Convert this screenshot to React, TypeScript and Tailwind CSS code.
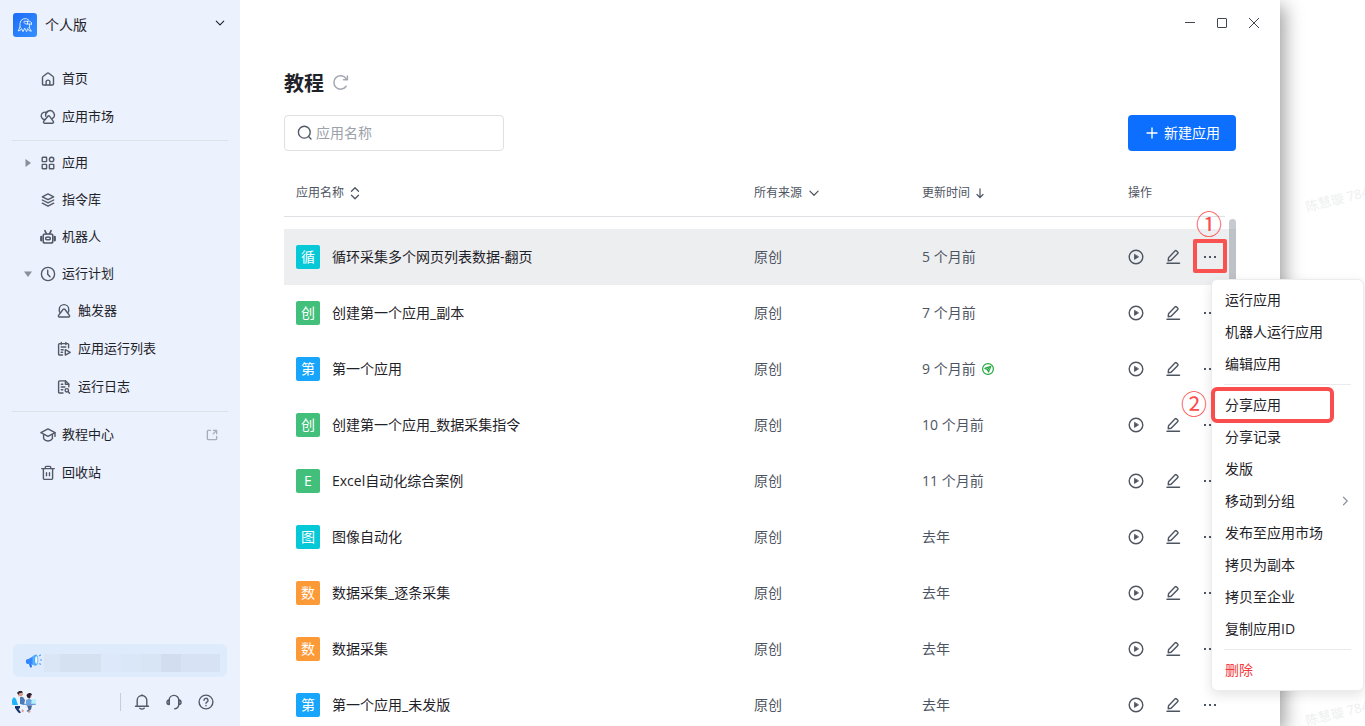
import type { ReactNode } from "react";

const stroke = {
  fill: "none",
  stroke: "currentColor",
  strokeWidth: 1.4,
  strokeLinecap: "round" as const,
  strokeLinejoin: "round" as const,
};

function Icon({ children, className = "size-4" }: { children: ReactNode; className?: string }) {
  return (
    <svg viewBox="0 0 16 16" className={`shrink-0 ${className}`} aria-hidden="true" {...stroke}>
      {children}
    </svg>
  );
}

const HomeIcon = () => (
  <Icon>
    <path d="M2.500 6.500c0-.4.200-.8.500-1l4.200-3.200a1.300 1.300 0 0 1 1.600 0L13 5.500c.3.200.5.600.5 1V13a1 1 0 0 1-1 1h-9a1 1 0 0 1-1-1z" />
    <path d="M6.100 13.900v-2.900a1.900 1.900 0 0 1 3.800 0v2.900" />
  </Icon>
);

const MarketIcon = () => (
  <Icon>
    <path d="M4.600 10.500a3.700 3.700 0 1 1 2.300-6.800" />
    <path d="M5.900 7.200A4.300 4.300 0 1 1 12.600 9.400" />
    <path d="M7.900 7.200 3.700 12.300c-.6.800-.2 1.900.8 1.900h8c1 0 1.400-1.100.8-1.900L9.500 7.200c-.5-.6-1.100-.6-1.600 0z" />
  </Icon>
);

const AppsIcon = () => (
  <Icon>
    <rect x="2.200" y="2.200" width="4.400" height="4.400" rx="0.600" />
    <circle cx="11.600" cy="4.400" r="2.200" />
    <rect x="2.200" y="9.400" width="4.400" height="4.400" rx="0.600" />
    <rect x="9.400" y="9.400" width="4.400" height="4.400" rx="0.600" />
  </Icon>
);

const LayersIcon = () => (
  <Icon>
    <path d="M8 1.900 13.700 4.800 8 7.700 2.300 4.800z" />
    <path d="M2.300 8 8 10.900 13.700 8" />
    <path d="M2.300 11.200 8 14.100l5.700-2.900" />
  </Icon>
);

const RobotIcon = () => (
  <Icon>
    <rect x="3.200" y="5" width="9.600" height="9" rx="1.800" strokeWidth="1.600" />
    <path d="M6.500 4.800 4.900 1.600M9.500 4.800l1.600-3.200" strokeWidth="1.600" />
    <ellipse cx="8" cy="9.400" rx="2.400" ry="1.400" />
    <path d="M1.200 7.900v3.400M14.800 7.900v3.400" strokeWidth="2.200" />
  </Icon>
);

const ClockIcon = () => (
  <Icon>
    <circle cx="8" cy="8" r="6.600" />
    <path d="M7.700 4.300v4l2.300 2.500" />
  </Icon>
);

const TriggerIcon = () => (
  <Icon>
    <path d="M3.700 9.200A4.900 4.900 0 0 1 3.300 6.300 4.700 4.700 0 0 1 12.700 6.300a4.900 4.900 0 0 1-.4 2.900" />
    <path d="M8 5.900c-.5 0-.8.200-1 .6L2.600 12.400c-.5.800-.1 1.600.8 1.600h9.200c.9 0 1.300-.8.800-1.600L9 6.500c-.2-.4-.5-.6-1-.6z" />
  </Icon>
);

const RunListIcon = () => (
  <Icon>
    <path d="M6.500 14H3.600a1 1 0 0 1-1-1V3.600a1 1 0 0 1 1-1h8a1 1 0 0 1 1 1v3.200" />
    <path d="M5.300 1.500v2M9.900 1.500v2M5.200 6h4.600M5.200 8.700h2M5.200 11.300h1.300" />
    <path d="M9.300 8.700v5.400l4.900-2.700z" />
  </Icon>
);

const LogIcon = () => (
  <Icon>
    <path d="M7 14H3.600a1 1 0 0 1-1-1V2.900a1 1 0 0 1 1-1h6l3.200 3.200v2.700" />
    <path d="M9.400 2v3.300h3.300M5.300 5.300h1.500M5.300 8h3.600M5.300 10.700h1.500" />
    <circle cx="10.800" cy="11.300" r="1.700" />
    <path d="m12.200 12.600 1.300 1.700" />
  </Icon>
);

const CourseIcon = () => (
  <Icon>
    <path d="M8 1.900.900 5.600 8 9.300l7.100-3.700z" />
    <path d="M3.600 7.600v4.100C4.600 13.300 6.200 14 8 14s3.400-.7 4.400-2.300V7.600M15 6v3.400" />
  </Icon>
);

const TrashIcon = () => (
  <Icon>
    <path d="M1.700 3.600h12.600M5.300 3.400V2.200a.8.800 0 0 1 .8-.8h3.800a.8.800 0 0 1 .8.800v1.200" />
    <path d="M3.400 4v9.200a1.200 1.200 0 0 0 1.200 1.200h6.800a1.200 1.200 0 0 0 1.200-1.200V4M6.500 7.700v3M9.500 7.700v3" />
  </Icon>
);

const ExternalIcon = () => (
  <Icon className="size-3 text-[#a9aeb8]">
    <path
      d="M6 1.800H3a1.200 1.200 0 0 0-1.200 1.200v10A1.200 1.200 0 0 0 3 14.200h10a1.200 1.200 0 0 0 1.200-1.200v-3M9.800 1.800h4.400v4.400M14 2 9.500 6.500"
      strokeWidth="1.800"
    />
  </Icon>
);

type Item = {
  label: string;
  icon: ReactNode;
  arrow?: "right" | "down";
  external?: boolean;
};

function NavItem({ item, height, nested = false }: { item: Item; height: string; nested?: boolean }) {
  return (
    <li>
      <a
        href="#"
        className={`flex items-center pr-[22px] text-[13px] text-[#1f2329] ${height} ${nested ? "pl-14" : "pl-6"}`}
      >
        {!nested && (
          <span className="flex w-4 shrink-0">
            {item.arrow && (
              <svg viewBox="0 0 8 8" className="size-2 fill-[#8a8f99]" aria-hidden="true">
                {item.arrow === "right" ? <path d="M1.500 0 7 4 1.500 8z" /> : <path d="M0 1.500h8L4 7z" />}
              </svg>
            )}
          </span>
        )}
        <span className="mr-[6px] text-[#525967]">{item.icon}</span>
        <span className="flex-1">{item.label}</span>
        {item.external && <ExternalIcon />}
      </a>
    </li>
  );
}

function Logo() {
  return (
    <svg viewBox="0 0 24 24" className="size-6 shrink-0" aria-hidden="true">
      <defs>
        <linearGradient id="logo-fill" x1="0" y1="0" x2="1" y2="1">
          <stop offset="0" stopColor="#1c6cf6" />
          <stop offset="1" stopColor="#3590ff" />
        </linearGradient>
      </defs>
      <rect width="24" height="24" rx="3" fill="url(#logo-fill)" />
      <g fill="none" stroke="#eaf3ff" strokeWidth="0.900" strokeLinejoin="round" strokeLinecap="round">
        <path d="M7 14.500V10.500A5.200 5.200 0 0 1 15.800 7" />
        <path d="M11.500 8.300h5l2 1.200v2.200l-1.200-.7h-4.800l-1.200-1.200zM14.500 8.300v2.700M16.600 11.200v3.300" />
        <path d="m7 14-1.800 4 2.400-.8.900-1.700 1.500 3.200 1.700-3.500 1.900 3.500 1.100-3.200 1.300 2.200 2.500.5-1.600-2.300-.9-1.400" />
      </g>
    </svg>
  );
}

function Megaphone() {
  return (
    <svg viewBox="0 0 18 16" className="h-4 w-[18px] shrink-0" aria-hidden="true">
      <path d="M1.500 6.500 4 5.700l6.500-4v11L5 10.800l-2.500.3C1 11 .3 7.500 1.500 6.500z" fill="#3386ff" />
      <path d="m3.800 10.500 2.700.8.500 3-1.800.3z" fill="#2271f5" />
      <path d="m7.500 3.600 3-2v11l-3-.9z" fill="#56b4ff" />
      <ellipse cx="11" cy="7" rx="2.300" ry="5.400" fill="#4da8ff" />
      <ellipse cx="11.300" cy="7" rx="1.200" ry="3.800" fill="#f2f9ff" />
      <path d="m14.200 3 1.600-1.300M15 7h2M14.300 10.500l1.600 1.100" stroke="#4b9dff" strokeWidth="1.200" />
    </svg>
  );
}

function Avatar() {
  return (
    <svg viewBox="0 0 24 24" className="size-6" role="img" aria-label="头像">
      <defs>
        <clipPath id="avatar-clip">
          <circle cx="12" cy="12" r="12" />
        </clipPath>
      </defs>
      <g clipPath="url(#avatar-clip)">
        <rect width="24" height="24" fill="#eef3fc" />
        <path d="M6 2h4.500l.5 2.500L9 7H6.500z" fill="#d99a86" />
        <path d="M5 3 6.500 1H10l.7 1.700L7.500 3 6.500 5z" fill="#2b2439" />
        <path d="M3 7.500 8 6l4 2.500 1 6-2 2.500H4z" fill="#eaf4ff" />
        <path d="M8 7h3l2 3-1 5-4-1z" fill="#507ab3" />
        <path d="M0 9c2-3 4-1 4.500 1.500L6 15H0z" fill="#20b5fa" />
        <path d="M3 16h5v2l-1.500 1L9 22.500l-2 1L3 18z" fill="#17366f" />
        <circle cx="17.300" cy="6" r="2.300" fill="#d89a8b" />
        <path d="M14.500 5.500c.5-3 5-3.500 5.500-.5l-1.500.5-.5 3-2.500-1z" fill="#2a1d31" />
        <path d="M14 10 17 8.500l3.500 2v5H14z" fill="#6fa4dc" />
        <path d="M20 9h4v5h-5z" fill="#b5f1fb" />
        <path d="M12 13.800h12v1.300H12z" fill="#6a9cdd" />
        <path d="M15 15.500h5l-1 4-3 2.500-1.500-1 2-1.500z" fill="#4b6493" />
        <path d="m18 20 1 2.500-2 1-1-1.500zM10 19l2 1.500-1 2-1.500-1z" fill="#d5a497" />
      </g>
    </svg>
  );
}

const topItems: Item[] = [
  { label: "首页", icon: <HomeIcon /> },
  { label: "应用市场", icon: <MarketIcon /> },
];

const mainItems: Item[] = [
  { label: "应用", icon: <AppsIcon />, arrow: "right" },
  { label: "指令库", icon: <LayersIcon /> },
  { label: "机器人", icon: <RobotIcon /> },
  { label: "运行计划", icon: <ClockIcon />, arrow: "down" },
];

const planItems: Item[] = [
  { label: "触发器", icon: <TriggerIcon /> },
  { label: "应用运行列表", icon: <RunListIcon /> },
  { label: "运行日志", icon: <LogIcon /> },
];

const bottomItems: Item[] = [
  { label: "教程中心", icon: <CourseIcon />, external: true },
  { label: "回收站", icon: <TrashIcon /> },
];

function Sidebar() {
  return (
    <aside className="flex w-60 shrink-0 flex-col bg-[#ebf1fd]">
      <button type="button" className="mb-[11px] flex h-[49px] items-center gap-2 pl-[13px] pr-[14px] text-sm text-[#1f2329]">
        <Logo />
        <span className="flex-1 text-left">个人版</span>
        <Icon className="mb-1 size-3">
          <path d="m3 5.500 5 5 5-5" strokeWidth="1.500" />
        </Icon>
      </button>
      <nav className="flex-1">
        <ul>
          {topItems.map((item) => (
            <NavItem key={item.label} item={item} height="h-[38px]" />
          ))}
        </ul>
        <hr className="mx-3 mt-1 mb-[3px] border-[#dee1e8]" />
        <ul>
          {mainItems.map((item) => (
            <NavItem key={item.label} item={item} height="h-[37px]" />
          ))}
          {planItems.map((item) => (
            <NavItem key={item.label} item={item} height="h-[38px]" nested />
          ))}
        </ul>
        <hr className="mx-3 mt-[5px] mb-1 border-[#dee1e8]" />
        <ul>
          {bottomItems.map((item) => (
            <NavItem key={item.label} item={item} height="h-[38px]" />
          ))}
        </ul>
      </nav>
      <div className="mx-[13px] flex h-[33px] items-center rounded-md bg-[#deebfd] pl-3 pr-[7px]">
        <Megaphone />
        <div className="mt-[4px] ml-[1px] flex h-[18px] flex-1">
          <span className="w-4 bg-[#dae6f6]" />
          <span className="w-[41px] bg-[#d5e1f1]" />
          <span className="w-5 bg-[#dde9fa]" />
          <span className="w-5 bg-[#dae7f8]" />
          <span className="w-5 bg-[#d8e5f5]" />
          <span className="w-5 bg-[#d2deef]" />
          <span className="flex-1 bg-[#d7e3f4]" />
        </div>
      </div>
      <div className="flex h-[49px] items-center pl-3 pr-[26px] text-[#525967]">
        <Avatar />
        <div className="ml-auto flex items-center gap-4">
          <span className="-mr-[3px] h-[18px] w-px bg-[#c9cdd4]" />
          <button type="button" aria-label="通知" className="flex">
            <Icon>
              <path d="M1.500 12.300h13M3.200 12.200V6.300a4.800 4.800 0 0 1 9.600 0v5.900" />
              <path d="M5.800 14.300c1.300 1 3.100 1 4.400 0M8 1.400V.900" />
            </Icon>
          </button>
          <button type="button" aria-label="客服" className="flex">
            <Icon>
              <path d="M3.200 10V6.200a4.800 4.800 0 0 1 9.600 0V10c0 2.700-1.600 4.500-4 4.800" />
              <path d="M3.200 6C.200 6 .200 10.500 3.200 10.500zM12.800 6c3 0 3 4.500 0 4.500z" />
            </Icon>
          </button>
          <button type="button" aria-label="帮助" className="flex">
            <Icon>
              <circle cx="8" cy="8" r="6.900" />
              <path d="M6 6.300a2 2 0 1 1 2.900 1.800c-.6.300-.9.600-.9 1.200M8 11.500v.2" />
            </Icon>
          </button>
        </div>
      </div>
    </aside>
  );
}

type Row = { badge: string; color: string; name: string; time: string; published?: boolean };

const rows: Row[] = [
  { badge: "循", color: "bg-[#06c8d6]", name: "循环采集多个网页列表数据-翻页", time: "5 个月前" },
  { badge: "创", color: "bg-[#42c07b]", name: "创建第一个应用_副本", time: "7 个月前" },
  { badge: "第", color: "bg-[#18a6fd]", name: "第一个应用", time: "9 个月前", published: true },
  { badge: "创", color: "bg-[#42c07b]", name: "创建第一个应用_数据采集指令", time: "10 个月前" },
  { badge: "E", color: "bg-[#42c07b]", name: "Excel自动化综合案例", time: "11 个月前" },
  { badge: "图", color: "bg-[#06c8d6]", name: "图像自动化", time: "去年" },
  { badge: "数", color: "bg-[#fd9a38]", name: "数据采集_逐条采集", time: "去年" },
  { badge: "数", color: "bg-[#fd9a38]", name: "数据采集", time: "去年" },
  { badge: "第", color: "bg-[#18a6fd]", name: "第一个应用_未发版", time: "去年" },
];

function Step({ children, className }: { children: ReactNode; className: string }) {
  return (
    <span
      className={`absolute font-['Noto_Sans_CJK_SC',sans-serif] text-[26px] leading-6 text-[#fa4d4d] ${className}`}
    >
      {children}
    </span>
  );
}

function AppRow({ row, active }: { row: Row; active: boolean }) {
  return (
    <tr className={`h-14 ${active ? "bg-[#edeef0]" : ""}`}>
      <td className="px-3">
        <div className="flex items-center gap-3 text-[#1f2329]">
          <span className={`flex size-6 items-center justify-center rounded-[2px] text-white ${row.color}`}>
            {row.badge}
          </span>
          {row.name}
        </div>
      </td>
      <td className="px-3">原创</td>
      <td className="px-3">
        <div className="flex items-center gap-[6px]">
          {row.time}
          {row.published && (
            <Icon className="size-3 text-[#1fa83c]">
              <circle cx="8" cy="8" r="7.200" strokeWidth="1.600" />
              <path d="M11.800 4.500 3.800 7.200l3.400 1.500 1.500 3.300zM7.200 8.700l1.500-1.400" strokeWidth="1.500" />
            </Icon>
          )}
        </div>
      </td>
      <td colSpan={2} className="pl-[13px]">
        <div className="flex items-center gap-[21px]">
          <button type="button" aria-label="运行" className="flex">
            <Icon>
              <circle cx="8" cy="8" r="6.800" />
              <path d="M6.500 5.600v4.800L10.300 8z" fill="currentColor" strokeWidth="0.800" />
            </Icon>
          </button>
          <button type="button" aria-label="编辑" className="flex">
            <Icon>
              <path d="M2 14.300h12.500" strokeWidth="1.500" />
              <path d="m3.200 11.700.3-3 6.700-6.900a.8.800 0 0 1 1.100 0l1.500 1.500a.8.800 0 0 1 0 1.100L6.100 11.300z" />
            </Icon>
          </button>
          <button type="button" aria-label="更多" className="relative flex">
            <Icon>
              <g fill="currentColor" stroke="none">
                <rect x="2" y="7" width="2" height="2" />
                <rect x="7" y="7" width="2" height="2" />
                <rect x="12" y="7" width="2" height="2" />
              </g>
            </Icon>
            {active && (
              <>
                <span className="absolute -top-[10px] -left-[9px] size-[34px] rounded-xs border-4 border-[#fa5151]" />
                <Step className="-top-[38px] -left-[6px]">①</Step>
              </>
            )}
          </button>
        </div>
      </td>
    </tr>
  );
}

function AppTable() {
  const th = "border-b border-[#dee0e3] px-3 text-left font-normal";
  return (
    <div className="relative mt-[18px] flex-1 overflow-hidden">
      <table className="w-full table-fixed border-separate border-spacing-0 text-sm text-[#4e5562]">
        <colgroup>
          <col />
          <col className="w-[168px]" />
          <col className="w-[205px]" />
          <col className="w-[110px]" />
          <col className="w-[11px]" />
        </colgroup>
        <thead className="text-xs">
          <tr className="h-12">
            <th className={th}>
              <button type="button" className="flex items-center gap-1">
                应用名称
                <Icon className="size-3.5">
                  <path d="m4 6 4-4 4 4M4 10.500l4 4 4-4" strokeWidth="1.500" />
                </Icon>
              </button>
            </th>
            <th className={th}>
              <button type="button" className="flex items-center gap-[6px]">
                所有来源
                <Icon className="size-3">
                  <path d="m2.500 5.500 5.500 5.500 5.500-5.500" strokeWidth="1.600" />
                </Icon>
              </button>
            </th>
            <th className={th}>
              <button type="button" className="flex items-center gap-1">
                更新时间
                <Icon className="size-3">
                  <path d="M8 2.500v11.500M4 10l4 4 4-4" strokeWidth="1.600" />
                </Icon>
              </button>
            </th>
            <th className={`${th} pl-[13px]`}>操作</th>
            <td />
          </tr>
        </thead>
        <tbody>
          <tr className="h-3" aria-hidden="true">
            <td colSpan={5} />
          </tr>
          {rows.map((row, i) => (
            <AppRow key={row.name} row={row} active={i === 0} />
          ))}
        </tbody>
      </table>
      <span className="absolute top-[50px] right-0 h-72 w-[7px] rounded-full bg-[#8f959e]/50" />
    </div>
  );
}

function Main() {
  return (
    <main className="flex min-w-0 flex-1 flex-col bg-white px-11">
      <div className="-mr-[34px] flex h-[46px] items-center justify-end text-[#41464f]">
        <button type="button" aria-label="最小化" className="flex size-8 items-center justify-center">
          <svg viewBox="0 0 10 10" className="size-2.5" fill="none" stroke="currentColor">
            <path d="M0 4.500h10" />
          </svg>
        </button>
        <button type="button" aria-label="最大化" className="flex size-8 items-center justify-center">
          <svg viewBox="0 0 10 10" className="size-2.5" fill="none" stroke="currentColor">
            <rect x="0.500" y="0.500" width="9" height="9" rx="0.500" />
          </svg>
        </button>
        <button type="button" aria-label="关闭" className="flex size-8 items-center justify-center">
          <svg viewBox="0 0 10 10" className="size-2.5" fill="none" stroke="currentColor">
            <path d="m0 0 10 10M10 0 0 10" />
          </svg>
        </button>
      </div>
      <div className="mt-[22px] flex h-8 items-center gap-2 text-xl font-bold text-[#1f2329]">
        <h1>教程</h1>
        <button type="button" aria-label="刷新" className="mb-1 flex text-[#a3a7af]">
          <Icon className="size-[17px]">
            <path d="M13.300 11.500A6.300 6.300 0 1 1 13.300 4.400M14.500 1.800v3.600h-3.600" />
          </Icon>
        </button>
      </div>
      <div className="mt-[15px] flex items-center justify-between">
        <label className="flex h-9 w-[220px] items-center gap-[3px] rounded border border-[#dee0e3] px-3 text-[#525967]">
          <Icon>
            <circle cx="7.300" cy="7.200" r="5.900" />
            <path d="m11.600 11.600 2.400 2.300" />
          </Icon>
          <input
            type="text"
            aria-label="应用名称"
            placeholder="应用名称"
            className="min-w-0 flex-1 text-sm outline-none placeholder:text-[#9da1a9]"
          />
        </label>
        <button
          type="button"
          className="flex h-9 items-center gap-1 rounded bg-[#0c6fff] px-4 text-sm text-white"
        >
          <Icon>
            <path d="M8 3v10M3 8h10" />
          </Icon>
          新建应用
        </button>
      </div>
      <AppTable />
    </main>
  );
}

const menuGroups = [
  ["运行应用", "机器人运行应用", "编辑应用"],
  ["分享应用", "分享记录", "发版", "移动到分组", "发布至应用市场", "拷贝为副本", "拷贝至企业", "复制应用ID"],
  ["删除"],
];

function ContextMenu() {
  return (
    <div
      role="menu"
      className="absolute top-[279px] right-px w-[153px] rounded-md border border-[#ebecee] bg-white py-1 text-sm text-[#1f2329] shadow-[0_4px_12px_rgba(31,35,41,0.12)]"
    >
      {menuGroups.map((group, i) => (
        <div key={group[0]} role="group">
          {i > 0 && <hr className="mx-3 my-1 border-[#e9eaec]" />}
          {group.map((label) => (
            <button
              key={label}
              type="button"
              role="menuitem"
              className={`relative flex h-8 w-full items-center justify-between pr-3 pl-[13px] ${
                label === "删除" ? "text-[#f5383d]" : ""
              }`}
            >
              {label}
              {label === "移动到分组" && (
                <Icon className="size-3 text-[#8f959e]">
                  <path d="m6 3 5 5-5 5" strokeWidth="1.600" />
                </Icon>
              )}
              {label === "分享应用" && (
                <>
                  <span className="absolute -top-[2px] -left-px h-9 w-[123px] rounded-md border-4 border-[#fa4d4d]" />
                  <Step className="top-[2px] -left-[31px]">②</Step>
                </>
              )}
            </button>
          ))}
        </div>
      ))}
    </div>
  );
}

function Watermark({ className }: { className: string }) {
  return (
    <span aria-hidden="true" className={`absolute -rotate-[14deg] text-[13px] whitespace-nowrap text-[#eeeff0] ${className}`}>
      陈慧璇 784
    </span>
  );
}

export default function App() {
  return (
    <div className="relative flex h-screen overflow-hidden bg-white font-['Open_Sans','Noto_Sans_CJK_SC',sans-serif]">
      <Watermark className="top-[190px] -right-[5px]" />
      <Watermark className="top-[704px] -right-[5px]" />
      <div className="mr-[85px] flex min-w-0 flex-1 shadow-[4px_6px_18px_rgba(0,0,0,0.4)]">
        <Sidebar />
        <Main />
      </div>
      <ContextMenu />
    </div>
  );
}
